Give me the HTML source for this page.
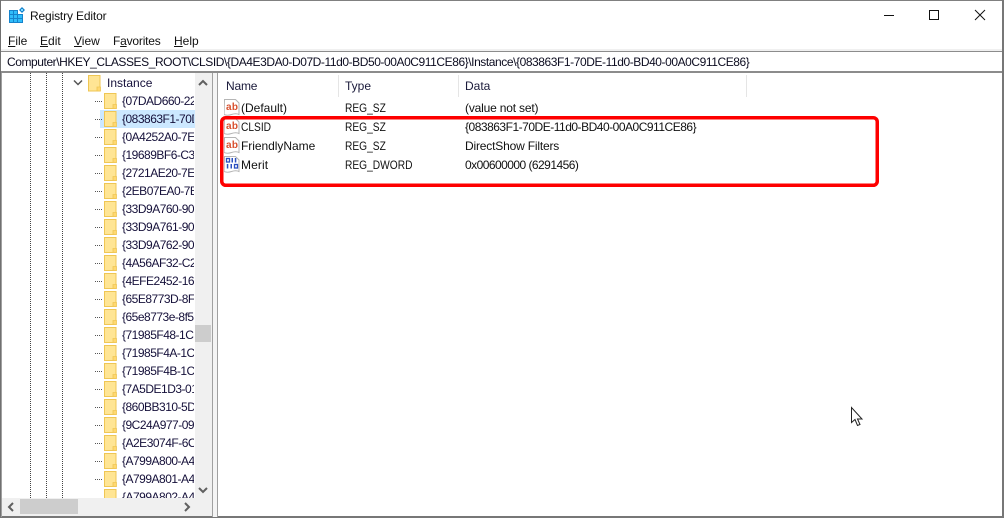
<!DOCTYPE html>
<html><head><meta charset="utf-8"><style>
html,body{margin:0;padding:0;width:1004px;height:518px;overflow:hidden;background:#fff}
body{position:relative;font-family:"Liberation Sans",sans-serif;font-size:12px;color:#111}
.a{position:absolute}
.t{position:absolute;white-space:nowrap;line-height:14px;height:14px}
.r{transform:scaleX(.85);transform-origin:0 0}
.k{position:absolute;left:122px;width:72px;overflow:hidden;white-space:nowrap;line-height:14px;height:15px;color:#15103a;letter-spacing:-.5px}
.f{position:absolute;left:104px;width:13px;height:16px}
.d{position:absolute;left:95px;width:7px;border-top:1px dotted #555}
.v{position:absolute;top:73px;height:425px;width:0;border-left:1px dotted #444}
u{text-decoration:underline}
</style></head><body>
<div class="a" style="left:0;top:0;width:1002px;height:1px;background:#808080"></div>
<div class="a" style="left:0;top:0;width:1px;height:518px;background:#707070"></div>
<div class="a" style="left:1002px;top:0;width:2px;height:518px;background:#777"></div>
<div class="a" style="left:0;top:516px;width:1004px;height:2px;background:#777"></div>

<svg class="a" style="left:8px;top:6px" width="18" height="18" viewBox="0 0 18 18">
<rect x="1" y="4" width="14" height="13" fill="#1583cc"/>
<g fill="#2fbdfa"><rect x="2" y="5" width="3" height="3"/><rect x="6" y="5" width="3" height="3"/><rect x="2" y="9" width="3" height="3"/><rect x="6" y="9" width="3" height="3"/><rect x="10" y="9" width="4" height="3"/><rect x="2" y="13" width="3" height="3"/><rect x="6" y="13" width="3" height="3"/><rect x="10" y="13" width="4" height="3"/></g>
<rect x="10" y="4" width="5" height="4" fill="#fff"/>
<path d="M14 1l3 3-3 3-3-3z" fill="#1583cc"/><rect x="13" y="3" width="2" height="2" fill="#7fd8ff"/>
</svg>
<div class="t" style="left:30px;top:9px;letter-spacing:-.15px">Registry Editor</div>

<div class="a" style="left:884px;top:15px;width:10px;height:1px;background:#111"></div>
<div class="a" style="left:929px;top:10px;width:8px;height:8px;border:1px solid #111"></div>
<svg class="a" style="left:974px;top:9px" width="12" height="12" viewBox="0 0 12 12"><path d="M1 1l10 10M11 1L1 11" stroke="#111" stroke-width="1" fill="none"/></svg>

<div class="t" style="left:8px;top:34px"><u>F</u>ile</div>
<div class="t" style="left:40px;top:34px"><u>E</u>dit</div>
<div class="t" style="left:74px;top:34px"><u>V</u>iew</div>
<div class="t" style="left:113px;top:34px;letter-spacing:-.2px">F<u>a</u>vorites</div>
<div class="t" style="left:174px;top:34px"><u>H</u>elp</div>

<div class="a" style="left:1px;top:49px;width:1001px;height:2px;background:#f0f0f0"></div>
<div class="a" style="left:1px;top:51px;width:1001px;height:1px;background:#8c8c8c"></div>
<div class="a" style="left:1px;top:71px;width:1001px;height:2px;background:#8c8c8c"></div>
<div class="t" style="left:7px;top:55px;letter-spacing:-.43px;color:#0c0c20">Computer\HKEY_CLASSES_ROOT\CLSID\{DA4E3DA0-D07D-11d0-BD50-00A0C911CE86}\Instance\{083863F1-70DE-11d0-BD40-00A0C911CE86}</div>

<!-- splitter -->
<div class="a" style="left:1px;top:73px;width:1px;height:444px;background:#a0a0a0"></div>
<div class="a" style="left:212px;top:73px;width:1px;height:444px;background:#a0a0a0"></div>
<div class="a" style="left:213px;top:73px;width:4px;height:444px;background:#f4f4f4"></div>
<div class="a" style="left:217px;top:73px;width:1px;height:444px;background:#a0a0a0"></div>

<!-- tree -->
<div class="v" style="left:30px"></div><div class="v" style="left:46px"></div><div class="v" style="left:62px"></div>
<div class="a" style="left:100px;top:110px;width:95px;height:18px;background:#cce8ff"></div>
<svg class="a" style="left:72px;top:79px" width="12" height="8" viewBox="0 0 12 8"><path d="M2 1.500l4 4 4-4" stroke="#555" stroke-width="1.500" fill="none"/></svg>
<svg class="a" style="left:88px;top:75px" width="13" height="17" viewBox="0 0 13 17"><path d="M.5.5h11.500v15.500H.5z" fill="#ffe594" stroke="#efc654"/><path d="M9 12h3.500v4H9z" fill="#ffd870" stroke="#efc654" stroke-width=".8"/></svg>
<div class="t" style="left:107px;top:76px;color:#15103a">Instance</div>

<svg width="0" height="0" style="position:absolute"><defs><g id="fo"><path d="M.5.5h11.500v15H.5z" fill="#ffe594" stroke="#efc654"/><path d="M9 11.500h3.500v4H9z" fill="#ffd870" stroke="#efc654" stroke-width=".8"/></g></defs></svg>

<div class="d" style="top:101px"></div><svg class="f" style="top:93px"><use href="#fo"/></svg><div class="k" style="top:94px">{07DAD660-22</div>
<div class="d" style="top:119px"></div><svg class="f" style="top:111px"><use href="#fo"/></svg><div class="k" style="top:112px">{083863F1-70D</div>
<div class="d" style="top:137px"></div><svg class="f" style="top:129px"><use href="#fo"/></svg><div class="k" style="top:130px">{0A4252A0-7E</div>
<div class="d" style="top:155px"></div><svg class="f" style="top:147px"><use href="#fo"/></svg><div class="k" style="top:148px">{19689BF6-C3</div>
<div class="d" style="top:173px"></div><svg class="f" style="top:165px"><use href="#fo"/></svg><div class="k" style="top:166px">{2721AE20-7E</div>
<div class="d" style="top:191px"></div><svg class="f" style="top:183px"><use href="#fo"/></svg><div class="k" style="top:184px">{2EB07EA0-7E</div>
<div class="d" style="top:209px"></div><svg class="f" style="top:201px"><use href="#fo"/></svg><div class="k" style="top:202px">{33D9A760-90</div>
<div class="d" style="top:227px"></div><svg class="f" style="top:219px"><use href="#fo"/></svg><div class="k" style="top:220px">{33D9A761-90</div>
<div class="d" style="top:245px"></div><svg class="f" style="top:237px"><use href="#fo"/></svg><div class="k" style="top:238px">{33D9A762-90</div>
<div class="d" style="top:263px"></div><svg class="f" style="top:255px"><use href="#fo"/></svg><div class="k" style="top:256px">{4A56AF32-C2</div>
<div class="d" style="top:281px"></div><svg class="f" style="top:273px"><use href="#fo"/></svg><div class="k" style="top:274px">{4EFE2452-168</div>
<div class="d" style="top:299px"></div><svg class="f" style="top:291px"><use href="#fo"/></svg><div class="k" style="top:292px">{65E8773D-8F</div>
<div class="d" style="top:317px"></div><svg class="f" style="top:309px"><use href="#fo"/></svg><div class="k" style="top:310px">{65e8773e-8f5</div>
<div class="d" style="top:335px"></div><svg class="f" style="top:327px"><use href="#fo"/></svg><div class="k" style="top:328px">{71985F48-1C</div>
<div class="d" style="top:353px"></div><svg class="f" style="top:345px"><use href="#fo"/></svg><div class="k" style="top:346px">{71985F4A-1C</div>
<div class="d" style="top:371px"></div><svg class="f" style="top:363px"><use href="#fo"/></svg><div class="k" style="top:364px">{71985F4B-1C</div>
<div class="d" style="top:389px"></div><svg class="f" style="top:381px"><use href="#fo"/></svg><div class="k" style="top:382px">{7A5DE1D3-01</div>
<div class="d" style="top:407px"></div><svg class="f" style="top:399px"><use href="#fo"/></svg><div class="k" style="top:400px">{860BB310-5D</div>
<div class="d" style="top:425px"></div><svg class="f" style="top:417px"><use href="#fo"/></svg><div class="k" style="top:418px">{9C24A977-09</div>
<div class="d" style="top:443px"></div><svg class="f" style="top:435px"><use href="#fo"/></svg><div class="k" style="top:436px">{A2E3074F-6C</div>
<div class="d" style="top:461px"></div><svg class="f" style="top:453px"><use href="#fo"/></svg><div class="k" style="top:454px">{A799A800-A4</div>
<div class="d" style="top:479px"></div><svg class="f" style="top:471px"><use href="#fo"/></svg><div class="k" style="top:472px">{A799A801-A4</div>
<div class="a" style="left:100px;top:489px;width:95px;height:9px;overflow:hidden"><svg style="position:absolute;left:4px;top:0;width:13px;height:16px"><use href="#fo"/></svg><div class="k" style="top:1px;left:22px">{A799A802-A4</div></div>

<!-- tree scrollbars -->
<div class="a" style="left:195px;top:73px;width:17px;height:426px;background:#f0f0f0"></div>
<div class="a" style="left:195px;top:325px;width:16px;height:17px;background:#cdcdcd"></div>
<svg class="a" style="left:197px;top:79px" width="12" height="8" viewBox="0 0 12 8"><path d="M2 6l4-4 4 4" stroke="#606060" stroke-width="2" fill="none"/></svg>
<svg class="a" style="left:197px;top:486px" width="12" height="8" viewBox="0 0 12 8"><path d="M2 2l4 4 4-4" stroke="#606060" stroke-width="2" fill="none"/></svg>
<div class="a" style="left:2px;top:498px;width:210px;height:18px;background:#f0f0f0"></div>
<div class="a" style="left:20px;top:499px;width:58px;height:15px;background:#cdcdcd"></div>
<svg class="a" style="left:7px;top:501px" width="8" height="12" viewBox="0 0 8 12"><path d="M6 2L2 6l4 4" stroke="#606060" stroke-width="2" fill="none"/></svg>
<svg class="a" style="left:183px;top:501px" width="8" height="12" viewBox="0 0 8 12"><path d="M2 2l4 4-4 4" stroke="#606060" stroke-width="2" fill="none"/></svg>

<!-- list header -->
<div class="t" style="left:226px;top:79px;color:#1a1a3a;letter-spacing:-.2px">Name</div>
<div class="t" style="left:345px;top:79px;color:#1a1a3a">Type</div>
<div class="t" style="left:465px;top:79px;color:#1a1a3a">Data</div>
<div class="a" style="left:338px;top:75px;width:1px;height:22px;background:#e5e5e5"></div>
<div class="a" style="left:458px;top:75px;width:1px;height:22px;background:#e5e5e5"></div>
<div class="a" style="left:746px;top:75px;width:1px;height:22px;background:#e5e5e5"></div>

<!-- icons -->
<svg class="a" style="left:224px;top:99px" width="16" height="17" viewBox="0 0 16 17"><path d="M.5.5h11l3.500 3.500v11.500q-3-1.500-7.500 0t-7.500 0z" fill="#fff" stroke="#b5b5b5"/><text x="2" y="11" font-family="Liberation Sans" font-weight="bold" font-size="10" fill="#d8502e" textLength="12">ab</text></svg>
<svg class="a" style="left:224px;top:118px" width="16" height="17" viewBox="0 0 16 17"><path d="M.5.5h11l3.500 3.500v11.500q-3-1.500-7.500 0t-7.500 0z" fill="#fff" stroke="#b5b5b5"/><text x="2" y="11" font-family="Liberation Sans" font-weight="bold" font-size="10" fill="#d8502e" textLength="12">ab</text></svg>
<svg class="a" style="left:224px;top:137px" width="16" height="17" viewBox="0 0 16 17"><path d="M.5.5h11l3.500 3.500v11.500q-3-1.500-7.500 0t-7.500 0z" fill="#fff" stroke="#b5b5b5"/><text x="2" y="11" font-family="Liberation Sans" font-weight="bold" font-size="10" fill="#d8502e" textLength="12">ab</text></svg>
<svg class="a" style="left:224px;top:156px" width="16" height="17" viewBox="0 0 16 17"><path d="M.5.5h11l3.500 3.500v11.500q-3-1.500-7.500 0t-7.500 0z" fill="#fff" stroke="#b5b5b5"/><g fill="none" stroke="#2a4fc0" stroke-width="1.300"><rect x="2.500" y="2.500" width="3" height="3.500"/><rect x="10.500" y="8.500" width="3" height="3.500"/></g><g fill="#2a4fc0"><rect x="7.500" y="2" width="1.500" height="4.500"/><rect x="10.800" y="2" width="1.500" height="4.500"/><rect x="2.800" y="8" width="1.500" height="4.500"/><rect x="6.500" y="8" width="1.500" height="4.500"/></g></svg>

<!-- rows -->
<div class="t" style="left:241px;top:101px">(Default)</div>
<div class="t r" style="left:345px;top:101px">REG_SZ</div>
<div class="t" style="left:465px;top:101px;letter-spacing:-.18px">(value not set)</div>
<div class="t r" style="left:241px;top:120px">CLSID</div>
<div class="t r" style="left:345px;top:120px">REG_SZ</div>
<div class="t" style="left:465px;top:120px;letter-spacing:-.49px">{083863F1-70DE-11d0-BD40-00A0C911CE86}</div>
<div class="t" style="left:241px;top:139px;letter-spacing:-.04px">FriendlyName</div>
<div class="t r" style="left:345px;top:139px">REG_SZ</div>
<div class="t" style="left:465px;top:139px;letter-spacing:-.18px">DirectShow Filters</div>
<div class="t" style="left:241px;top:158px;letter-spacing:.1px">Merit</div>
<div class="t r" style="left:345px;top:158px">REG_DWORD</div>
<div class="t" style="left:465px;top:158px;letter-spacing:-.54px">0x00600000 (6291456)</div>

<!-- red box -->
<svg class="a" style="left:218px;top:114px" width="664" height="76" viewBox="218 114 664 76"><rect x="221.750" y="117.750" width="655.500" height="67.500" rx="4" fill="none" stroke="#fe0000" stroke-width="3.500"/></svg>

<!-- cursor -->
<svg class="a" style="left:849px;top:406px" width="15" height="22" viewBox="0 0 15 22"><path d="M2.500 1.500v15l3.500-3 2.500 6 2.500-1-2.500-5.500h4.500z" fill="#fff" stroke="#222" stroke-width="1"/></svg>
</body></html>
